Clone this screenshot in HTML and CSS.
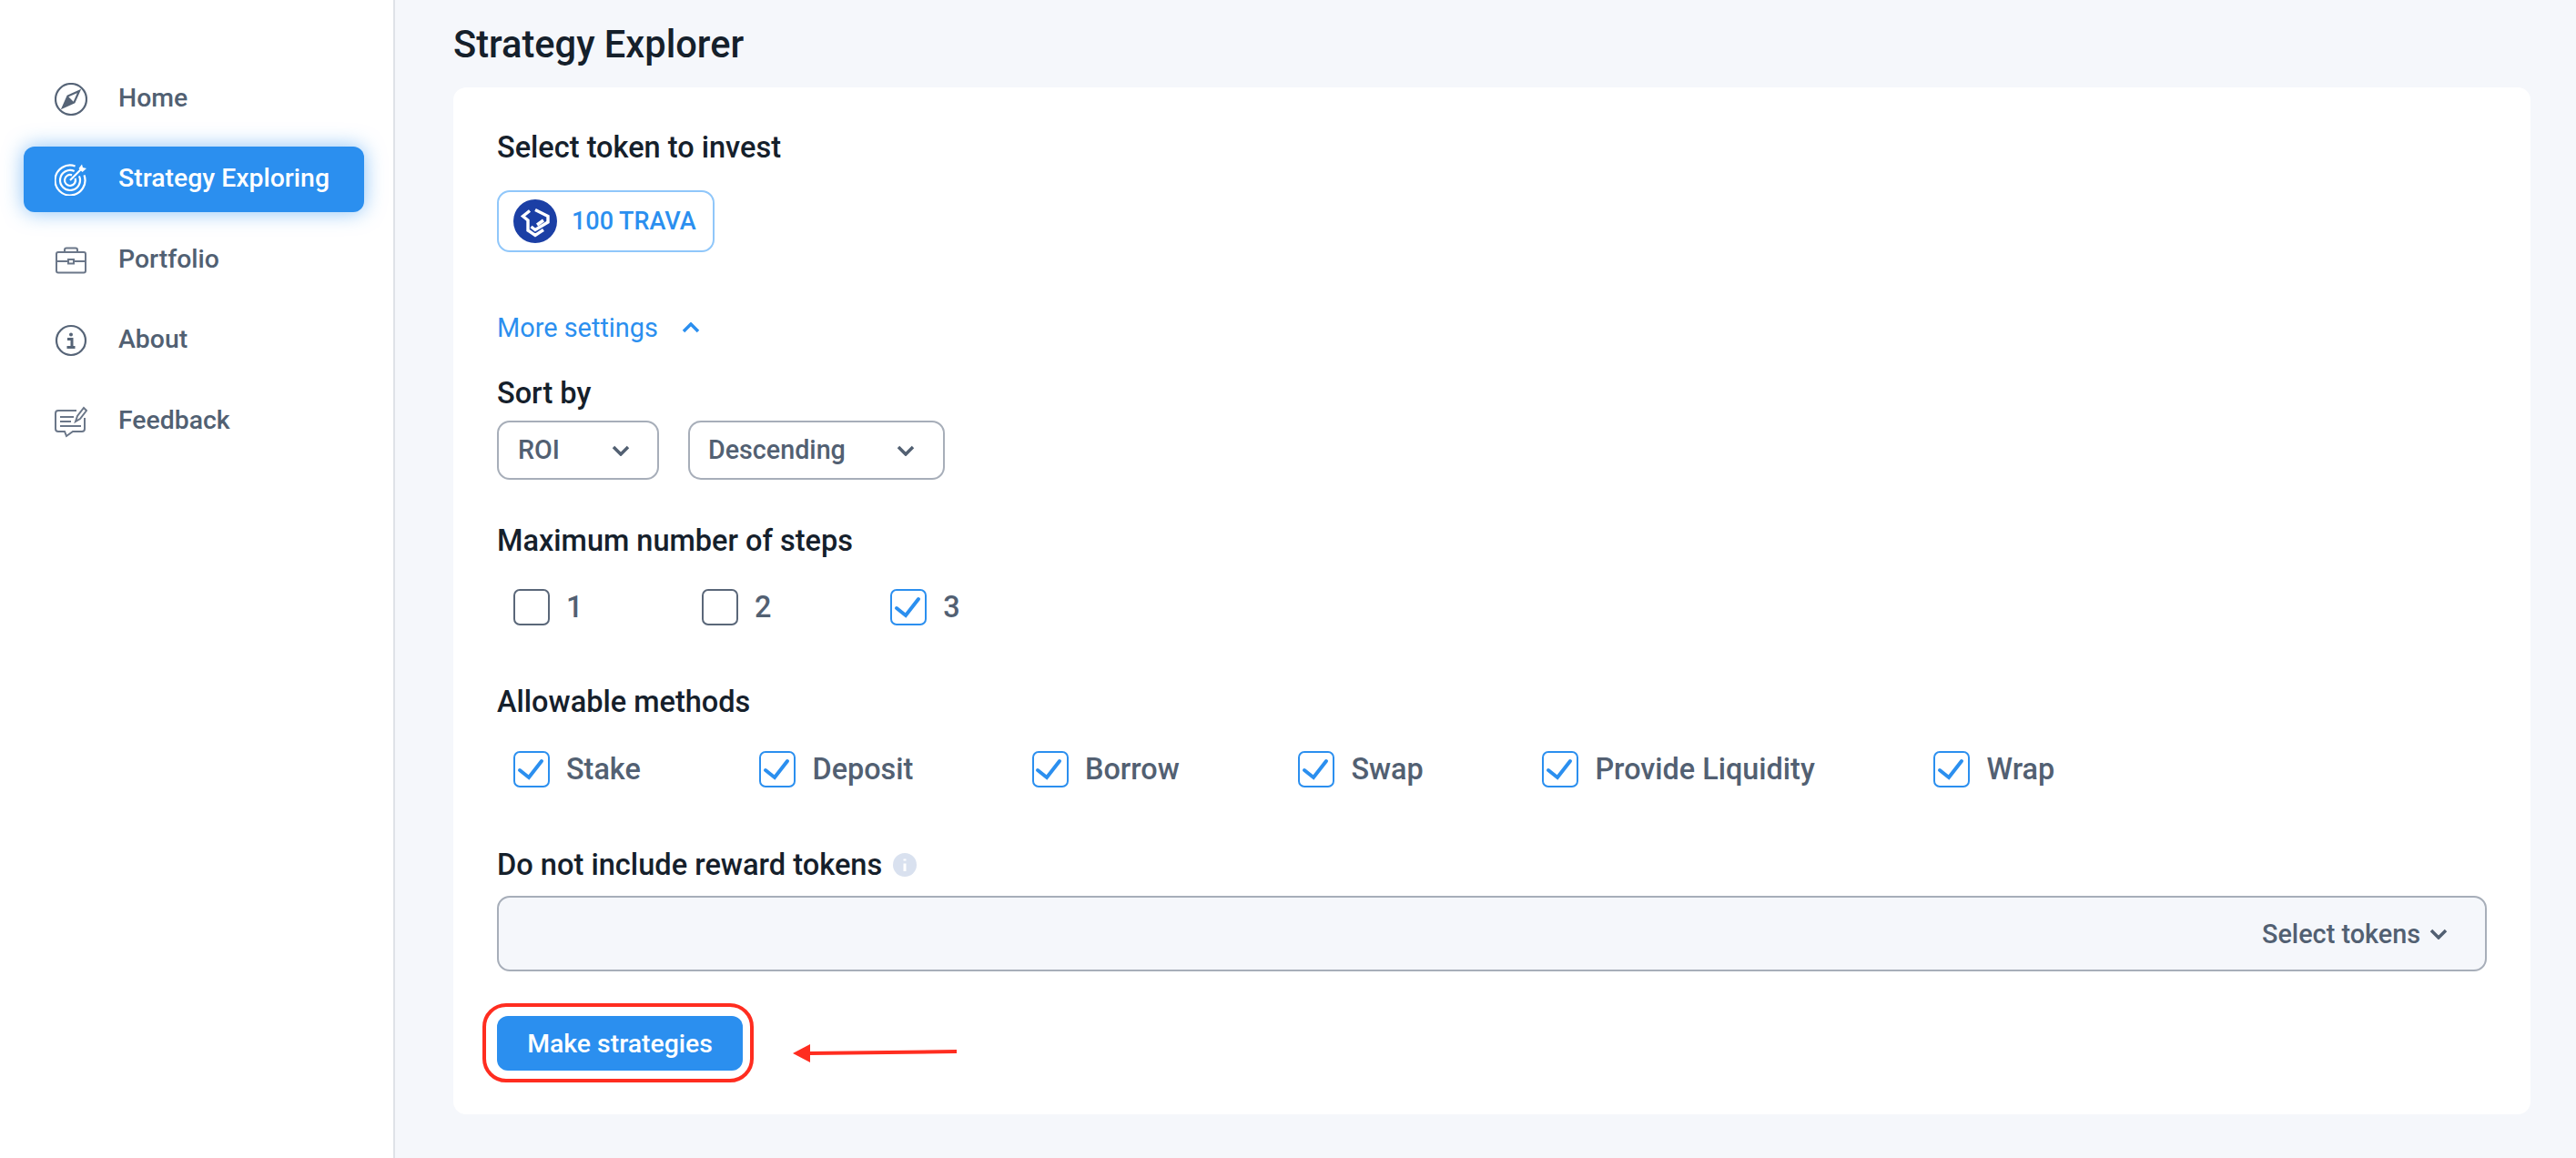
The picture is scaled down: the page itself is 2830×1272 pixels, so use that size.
FILE: index.html
```html
<!DOCTYPE html>
<html lang="en">
<head>
  <meta charset="UTF-8" />
  <title>Strategy Explorer</title>
  <link rel="stylesheet" href="styles.css">
</head>
<body>
  <div class="layout">
    <aside class="sidebar">
      <a class="nav-item">
        <svg class="nav-icon" viewBox="0 0 36 36"><circle cx="18" cy="18" r="17"/><path d="M27 9 21.5 21.5 9 27 14.500 14.500Z"/><path class="fill" d="M14.500 14.500 21.500 21.500 9 27Z"/></svg>
        Home
      </a>
      <a class="nav-item active">
        <svg class="nav-icon" viewBox="0 0 36 36"><path d="M22.600 3.500A16.500 16.500 0 1 0 32.500 13.400"/><path d="M21.650 9.030A11 11 0 1 0 26.970 14.350"/><path d="M19.050 13.360A6 6 0 1 0 22.640 16.950"/><path d="M17 19 29 7"/><path class="fill" d="M26.500 6 30 1.500 31 5 35 6 30.500 10Z"/></svg>
        Strategy Exploring
      </a>
      <a class="nav-item">
        <svg class="nav-icon thin" viewBox="0 0 36 36"><rect x="2" y="9" width="32" height="22.500" rx="2"/><path d="M11 9V6.500A2 2 0 0 1 13 4.500H23A2 2 0 0 1 25 6.500V9"/><path d="M2 19H15M21 19H34"/><rect x="15" y="17" width="6" height="4.500"/></svg>
        Portfolio
      </a>
      <a class="nav-item">
        <svg class="nav-icon" viewBox="0 0 36 36"><circle cx="18" cy="18" r="16"/><circle class="fill" cx="18" cy="11.500" r="2"/><path class="heavy" d="M14 16.500H19V25M13.500 25.500H22.500"/></svg>
        About
      </a>
      <a class="nav-item">
        <svg class="nav-icon thin" viewBox="0 0 36 36"><path d="M24 6H4A3 3 0 0 0 1 9V26A3 3 0 0 0 4 29H11L13 34 20 29H30A3 3 0 0 0 33 26V14"/><path d="M6 13H21M6 18H18M6 23H29"/><path d="M23 18 25 12 32 3 35 6 28 15Z"/></svg>
        Feedback
      </a>
    </aside>

    <main class="content">
      <h1 class="page-title">Strategy Explorer</h1>
      <section class="card">
        <div class="field-label">Select token to invest</div>
        <div class="token-chip">
          <svg class="token-logo" viewBox="0 0 48 48"><circle cx="24" cy="24" r="24"/><path d="M18 12.500 10.500 18.500 16 23V34L24 39.500 33 33.500M24 11.500 38 18.500V25L24 33.500 19.500 30M26 28 33 23"/></svg>
          100 TRAVA
        </div>

        <div class="more-settings">
          More settings
          <svg class="chevron" viewBox="0 0 20 12"><path d="M2 10 10 2 18 10"/></svg>
        </div>

        <div class="field-label sort-label">Sort by</div>
        <div class="select-row">
          <div class="select select-roi">ROI <svg class="chevron" viewBox="0 0 20 12"><path d="M2 2 10 10 18 2"/></svg></div>
          <div class="select select-order">Descending <svg class="chevron" viewBox="0 0 20 12"><path d="M2 2 10 10 18 2"/></svg></div>
        </div>

        <div class="field-label steps-label">Maximum number of steps</div>
        <div class="check-row">
          <label class="check"><span class="box"></span>1</label>
          <label class="check"><span class="box"></span>2</label>
          <label class="check"><span class="box checked"><svg viewBox="0 0 40 40"><path d="M7 21 17 29 31 11"/></svg></span>3</label>
        </div>

        <div class="field-label methods-label">Allowable methods</div>
        <div class="check-row">
          <label class="check"><span class="box checked"><svg viewBox="0 0 40 40"><path d="M7 21 17 29 31 11"/></svg></span>Stake</label>
          <label class="check"><span class="box checked"><svg viewBox="0 0 40 40"><path d="M7 21 17 29 31 11"/></svg></span>Deposit</label>
          <label class="check"><span class="box checked"><svg viewBox="0 0 40 40"><path d="M7 21 17 29 31 11"/></svg></span>Borrow</label>
          <label class="check"><span class="box checked"><svg viewBox="0 0 40 40"><path d="M7 21 17 29 31 11"/></svg></span>Swap</label>
          <label class="check"><span class="box checked"><svg viewBox="0 0 40 40"><path d="M7 21 17 29 31 11"/></svg></span>Provide Liquidity</label>
          <label class="check"><span class="box checked"><svg viewBox="0 0 40 40"><path d="M7 21 17 29 31 11"/></svg></span>Wrap</label>
        </div>

        <div class="field-label exclude-label">
          Do not include reward tokens
          <svg class="info-dot" viewBox="0 0 26 26"><circle cx="13" cy="13" r="13"/><path d="M13 11.500V20M13 6.500V8.500"/></svg>
        </div>
        <div class="token-select">
          Select tokens
          <svg class="chevron" viewBox="0 0 20 12"><path d="M2 2 10 10 18 2"/></svg>
        </div>

        <div class="submit-wrap">
          <button class="submit-btn">Make strategies</button>
          <span class="callout-ring"></span>
          <svg class="callout-arrow" viewBox="0 0 180 20"><path d="M19 12 180 10" /><polygon points="0,12 19,2 19,22"/></svg>
        </div>
      </section>
    </main>
  </div>
</body>
</html>
```

FILE: styles.css
```css
* { box-sizing: border-box; }
html, body { height: 100%; }
body { margin: 0; background: #f5f7fb; font-family: Roboto, sans-serif; color: #15202b; overflow: hidden; }

.layout { display: flex; height: 1272px; }

/* sidebar */
.sidebar {
  width: 434px; flex: none; background: #fff; border-right: 2px solid #dfe2e8;
  padding: 72.5px 32px 0 26px;
  display: flex; flex-direction: column; gap: 16.5px;
}
.nav-item {
  display: flex; align-items: center; gap: 34px; height: 72px; padding: 0 0 3px 34px;
  font-size: 28.4px; font-weight: 500; color: #516072; border-radius: 12px;
}
.nav-item.active { background: #2b8fef; color: #fff; box-shadow: 0 0 22px rgba(43, 143, 239, 0.55); }
.nav-icon { width: 36px; height: 36px; flex: none; margin-top: 3px; fill: none; stroke: #566477; stroke-width: 2.2; }
.nav-icon .fill { fill: #566477; stroke: none; }
.nav-icon .heavy { stroke-width: 3; }
.nav-icon.thin { stroke: #6b7789; stroke-width: 2; }
.active .nav-icon { stroke: #fff; }
.active .nav-icon .fill { fill: #fff; }

/* main column */
.content { flex: 1; padding: 25px 50px 0 64px; }
.page-title { margin: 0 0 23px; font-size: 41.6px; line-height: 48px; font-weight: 500; }
.card { background: #fff; border-radius: 14px; padding: 48px 48px 48px 48px; }

.field-label { font-size: 32.5px; line-height: 36px; font-weight: 500; margin-bottom: 29px; }
.sort-label { margin-top: 36px; margin-bottom: 12px; }
.steps-label { margin-top: 49px; margin-bottom: 35px; }
.methods-label { margin-top: 66px; margin-bottom: 36px; }
.exclude-label { margin-top: 67px; margin-bottom: 16px; display: flex; align-items: center; gap: 12px; font-size: 32.6px; }

.token-chip {
  display: inline-flex; align-items: center; gap: 16px; height: 68px; width: 239px; padding-left: 16px;
  border: 2px solid #90c7fa; border-radius: 14px; background: #fff;
  font-size: 27px; font-weight: 500; color: #2b8fef; vertical-align: top;
}
.token-logo { width: 48px; height: 48px; flex: none; }
.token-logo circle { fill: #1b3fa5; }
.token-logo path { fill: none; stroke: #fff; stroke-width: 3.400; }

.chevron { width: 20px; height: 12px; flex: none; fill: none; stroke: #526072; stroke-width: 3.500; }

.more-settings {
  display: flex; align-items: center; gap: 26px; margin-top: 65px; line-height: 36px;
  font-size: 28.9px; color: #2b8fef;
}
.more-settings .chevron { stroke: #2b8fef; }

.select-row { display: flex; gap: 32px; }
.select {
  display: flex; align-items: center; justify-content: space-between; height: 65px;
  padding: 0 31px 2px 21px; border: 2px solid #a7aeb9; border-radius: 14px;
  font-size: 28.7px; font-weight: 500; color: #526072;
}
.select .chevron { margin-top: 2px; }
.select-roi { width: 178px; padding-right: 30px; }
.select-order { width: 282px; padding-left: 20px; }

.check-row { display: flex; gap: 130.700px; padding-left: 18px; height: 40px; }
.check { display: flex; align-items: center; gap: 18px; font-size: 32.4px; font-weight: 500; color: #526072; }
.box { width: 40px; height: 40px; flex: none; border: 2.500px solid #5a6779; border-radius: 7px; display: block; }
.box.checked { border-color: #2b8fef; }
.box svg { display: block; width: 40px; height: 40px; margin: -2.500px; fill: none; stroke: #2b8fef; stroke-width: 4; stroke-linecap: round; }

.info-dot { width: 26px; height: 26px; flex: none; }
.info-dot circle { fill: #d9e1ef; }
.info-dot path { stroke: #fff; stroke-width: 3; fill: none; }

.token-select {
  display: flex; align-items: center; justify-content: flex-end; gap: 10px; height: 83px;
  padding-right: 41px; background: #f5f7fb; border: 2px solid #a7aeb9; border-radius: 14px;
  font-size: 28.8px; font-weight: 500; color: #526072;
}

.submit-wrap { position: relative; margin-top: 49px; width: 270px; height: 60px; }
.submit-btn {
  display: block; width: 270px; height: 60px; border: 0; border-radius: 12px; background: #2b8fef;
  color: #fff; font-family: inherit; font-size: 28.4px; font-weight: 500;
}
/* red annotation drawn on top of the screenshot */
.callout-ring {
  position: absolute; left: -16px; top: -14px; width: 298px; height: 87px;
  border: 4px solid #ff2d20; border-radius: 26px;
}
.callout-arrow {
  position: absolute; left: 325px; top: 27px; width: 180px; height: 24px; overflow: visible;
}
.callout-arrow path { stroke: #ff2d20; stroke-width: 4; fill: none; }
.callout-arrow polygon { fill: #ff2d20; }
```
